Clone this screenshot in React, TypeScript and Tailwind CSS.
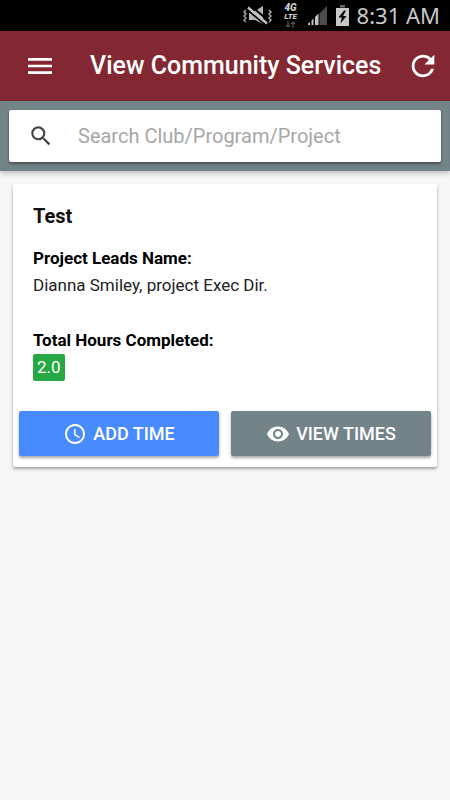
import { useState } from "react";
import { MdAccessTime, MdMenu, MdRefresh, MdSearch, MdVisibility } from "react-icons/md";

interface Service {
  id: number;
  name: string;
  leads: string;
  hours: number;
}

const services: Service[] = [
  { id: 1, name: "Test", leads: "Dianna Smiley, project Exec Dir.", hours: 2 },
];

function MutedIcon() {
  return (
    <svg width="30" height="20" viewBox="0 0 30 20" fill="none" aria-hidden="true">
      <path d="M6 5h6l8-5v18l-8-4H6z" fill="#b5b5b5" />
      <path d="M4 3.500l19 16M8 0l18 15" stroke="#000" strokeWidth="1.800" />
      <path d="M5 1.500l19 16" stroke="#c4c4c4" strokeWidth="2.400" />
      <path
        d="M3 4L1 6l2 2-2 2 2 2-2 2 2 2M26 4l2 2-2 2 2 2-2 2 2 2-2 2"
        stroke="#a8a8a8"
        strokeWidth="1.500"
      />
    </svg>
  );
}

function SignalIcon() {
  return (
    <svg width="21" height="21" viewBox="0 0 21 21" aria-hidden="true">
      <path d="M12.500 8.500L20 1v19h-7.500z" fill="#4c4c4c" />
      <path d="M1 20v-1.500L3 17v3zM4.500 20v-4.500l2-2V20zM8 20v-8l3.500-3.500V20z" fill="#c4c4c4" />
    </svg>
  );
}

function BatteryIcon() {
  return (
    <svg width="13" height="21" viewBox="0 0 13 21" aria-hidden="true">
      <path d="M4 0h5v2.500H4z" fill="#6a6a6a" />
      <path d="M0 3h13v18H0z" fill="#c8c8c8" />
      <path d="M8 5.500L2.500 12.500h3.300L4.500 18.500l6-7.500H7l3-5.500z" fill="#000" />
    </svg>
  );
}

function StatusBar() {
  return (
    <div className="flex h-[31px] items-center justify-end bg-black pr-2.5 text-[#c8c8c8]">
      <MutedIcon />
      <div className="ml-2 flex w-5 flex-col items-center font-['Roboto'] font-black italic">
        <span className="text-[10px] leading-[10px]">4G</span>
        <span className="text-[8px] leading-[8px]">LTE</span>
        <svg width="11" height="7" viewBox="0 0 11 7" fill="none" stroke="#555" aria-hidden="true">
          <path d="M3 0v6M1 4l2 2 2-2M8 7V1M6 3l2-2 2 2" strokeWidth="1.200" />
        </svg>
      </div>
      <div className="ml-1.5 flex items-center gap-2">
        <SignalIcon />
        <BatteryIcon />
        <span className="font-['Noto_Sans',sans-serif] text-[22px] leading-[31px]">8:31 AM</span>
      </div>
    </div>
  );
}

function ServiceCard({ service }: { service: Service }) {
  return (
    <article className="rounded-xs bg-white p-1.5 pb-[11px] shadow-[0_2px_3px_rgba(0,0,0,0.35)]">
      <div className="px-3.5 pt-3.5 text-[17px] leading-[27px] text-black">
        <h2 className="mb-[17px] text-xl leading-6 font-bold text-[#111]">{service.name}</h2>
        <h3 className="font-bold">Project Leads Name:</h3>
        <p className="text-[#222]">{service.leads}</p>
        <h3 className="mt-7 font-bold">Total Hours Completed:</h3>
        <span className="inline-block rounded-xs bg-[#28a745] px-1 text-white">
          {service.hours.toFixed(1)}
        </span>
      </div>
      <div className="mt-[30px] grid grid-cols-2 gap-3 text-lg font-medium text-white">
        <button
          type="button"
          className="flex h-[45px] items-center justify-center gap-1.5 rounded-xs bg-[#488aff] shadow-[0_2px_3px_rgba(0,0,0,0.35)]"
        >
          <MdAccessTime size={24} />
          ADD TIME
        </button>
        <button
          type="button"
          className="flex h-[45px] items-center justify-center gap-1.5 rounded-xs bg-[#738489] shadow-[0_2px_3px_rgba(0,0,0,0.35)]"
        >
          <MdVisibility size={24} />
          VIEW TIMES
        </button>
      </div>
    </article>
  );
}

export default function App() {
  const [query, setQuery] = useState("");

  const visible = services.filter((service) =>
    service.name.toLowerCase().includes(query.toLowerCase())
  );

  return (
    <div className="min-h-screen bg-[#f6f6f6] font-['Roboto',sans-serif]">
      <StatusBar />
      <header className="flex h-[70px] items-center bg-[#832832] pr-2.5 pl-6 text-white">
        <button type="button" aria-label="Menu">
          <MdMenu size={32} />
        </button>
        <h1 className="ml-[34px] flex-1 text-[25px] leading-8 font-medium whitespace-nowrap">
          View Community Services
        </h1>
        <button type="button" aria-label="Refresh">
          <MdRefresh size={34} />
        </button>
      </header>
      <div className="bg-[#738489] p-[9px] shadow-[0_2px_5px_rgba(0,0,0,0.25)]">
        <label className="flex h-[52px] items-center rounded-xs bg-white pl-[19px] shadow-[0_2px_3px_rgba(0,0,0,0.4)]">
          <MdSearch size={26} className="text-[#444]" />
          <input
            type="search"
            aria-label="Search"
            placeholder="Search Club/Program/Project"
            value={query}
            onChange={(e) => setQuery(e.target.value)}
            className="ml-6 min-w-0 flex-1 bg-transparent text-xl outline-none placeholder:text-[#a6a6a6]"
          />
        </label>
      </div>
      <main className="space-y-3 px-[13px] py-[13px]">
        {visible.map((service) => (
          <ServiceCard key={service.id} service={service} />
        ))}
      </main>
    </div>
  );
}
